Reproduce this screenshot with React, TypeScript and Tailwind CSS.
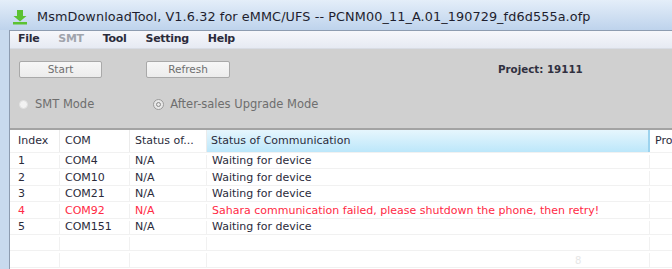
import React from "react";

const rows = [
  { idx: "1", com: "COM4", st: "N/A", msg: "Waiting for device", err: false },
  { idx: "2", com: "COM10", st: "N/A", msg: "Waiting for device", err: false },
  { idx: "3", com: "COM21", st: "N/A", msg: "Waiting for device", err: false },
  {
    idx: "4",
    com: "COM92",
    st: "N/A",
    msg: "Sahara communication failed, please shutdown the phone, then retry!",
    err: true,
  },
  { idx: "5", com: "COM151", st: "N/A", msg: "Waiting for device", err: false },
  { idx: "", com: "", st: "", msg: "", err: false },
  { idx: "", com: "", st: "", msg: "", err: false },
  { idx: "", com: "", st: "", msg: "", err: false },
];

function DownloadIcon() {
  return (
    <svg width="16" height="16" viewBox="0 0 16 16">
      <path d="M5 1h6v6h3.5L8 12.5 1.5 7H5z" fill="#5cc233" />
      <rect x="1" y="13" width="14" height="2.5" fill="#5cc233" />
    </svg>
  );
}

export default function App() {
  return (
    <div
      className="flex h-[269px] w-[672px] flex-col overflow-hidden bg-[#c8daee] text-[#2b2b3b]"
      style={{ fontFamily: '"DejaVu Sans", Verdana, sans-serif' }}
    >
      {/* title bar */}
      <div className="flex h-[30px] shrink-0 items-center gap-[9px] bg-gradient-to-b from-[#e4eef9] to-[#bed3ec] pl-[12px] pt-[3px]">
        <DownloadIcon />
        <span className="text-[12.8px] tracking-[0.1px] text-[#1e1e2e]">
          MsmDownloadTool, V1.6.32 for eMMC/UFS -- PCNM00_11_A.01_190729_fd6d555a.ofp
        </span>
      </div>

      <div className="flex flex-1 pl-[9px]">
        <div className="flex flex-1 flex-col border-l border-t border-[#8d9cb0]">
          {/* menu bar */}
          <div className="flex h-[18px] shrink-0 items-center gap-[19px] border-b border-[#d8dce4] bg-gradient-to-b from-[#f6f7fb] to-[#e6eaf3] pl-[8px] text-[11px] font-bold tracking-[-0.3px]">
            <span>File</span>
            <span className="text-[#a0a4ac]">SMT</span>
            <span>Tool</span>
            <span>Setting</span>
            <span>Help</span>
          </div>

          {/* control area */}
          <div className="flex h-[79px] shrink-0 flex-col bg-[#d0d0d0] pl-[9px] pt-[12px] text-[11.5px]">
            <div className="flex items-center">
              <button className="h-[17px] w-[83px] rounded-[2px] border border-[#a9a9a9] bg-gradient-to-b from-[#f7f7f7] to-[#ececec] text-[10.5px] text-[#6f6f6f]">
                Start
              </button>
              <button className="ml-[44px] h-[17px] w-[84px] rounded-[2px] border border-[#a9a9a9] bg-gradient-to-b from-[#f7f7f7] to-[#ececec] text-[10.5px] text-[#6f6f6f]">
                Refresh
              </button>
              <span className="ml-[268px] text-[10.3px] font-bold text-[#303040]">Project: 19111</span>
            </div>
            <div className="mt-[18px] flex items-center text-[#6e6e6e]">
              <span className="flex items-center gap-[7px]">
                <span className="h-[9px] w-[9px] rounded-full border border-[#e0e0e0] bg-[#f2f2f2]" />
                <span>SMT Mode</span>
              </span>
              <span className="ml-[59px] flex items-center gap-[6px]">
                <span className="flex h-[11px] w-[11px] items-center justify-center rounded-full border border-[#9a9a9a] bg-[#e8e8e8]">
                  <span className="h-[5px] w-[5px] rounded-full border border-[#8a8a8a]" />
                </span>
                <span>After-sales Upgrade Mode</span>
              </span>
            </div>
          </div>

          {/* table */}
          <div className="relative flex-1 border-t-2 border-[#a3a3a3] bg-white text-[11px]">
            <div className="flex h-[22px] items-center">
              <div className="flex h-full w-[50px] items-center border-r border-[#ebebeb] pl-[8px]">Index</div>
              <div className="flex h-full w-[70px] items-center border-r border-[#ebebeb] pl-[5px]">COM</div>
              <div className="flex h-full w-[77px] items-center border-r border-[#ebebeb] pl-[5px]">Status of...</div>
              <div className="flex h-full w-[443px] items-center border-r-2 border-[#9cd3ee] bg-gradient-to-b from-[#e6f6fd] to-[#bce7fa] pl-[4px]">
                Status of Communication
              </div>
              <div className="flex h-full flex-1 items-center pl-[5px]">Pro</div>
            </div>
            {rows.map((r, i) => (
              <div
                key={i}
                className={`flex h-[16.4px] items-center border-t border-[#f1f1f1] pt-[2px] ${
                  r.err ? "text-[#ff2a45]" : ""
                }`}
              >
                <div className="flex h-full w-[50px] items-center border-r border-[#f1f1f1] pl-[8px]">{r.idx}</div>
                <div className="flex h-full w-[70px] items-center border-r border-[#f1f1f1] pl-[5px]">{r.com}</div>
                <div className="flex h-full w-[77px] items-center border-r border-[#f1f1f1] pl-[5px]">{r.st}</div>
                <div className="flex h-full w-[443px] items-center whitespace-nowrap border-r border-[#f1f1f1] pl-[5px]">
                  {r.msg}
                </div>
                <div className="h-full flex-1" />
              </div>
            ))}
            <span className="absolute left-[565px] top-[123px] text-[10px] text-[#e6e6e6]">8</span>
          </div>
        </div>
      </div>
    </div>
  );
}
